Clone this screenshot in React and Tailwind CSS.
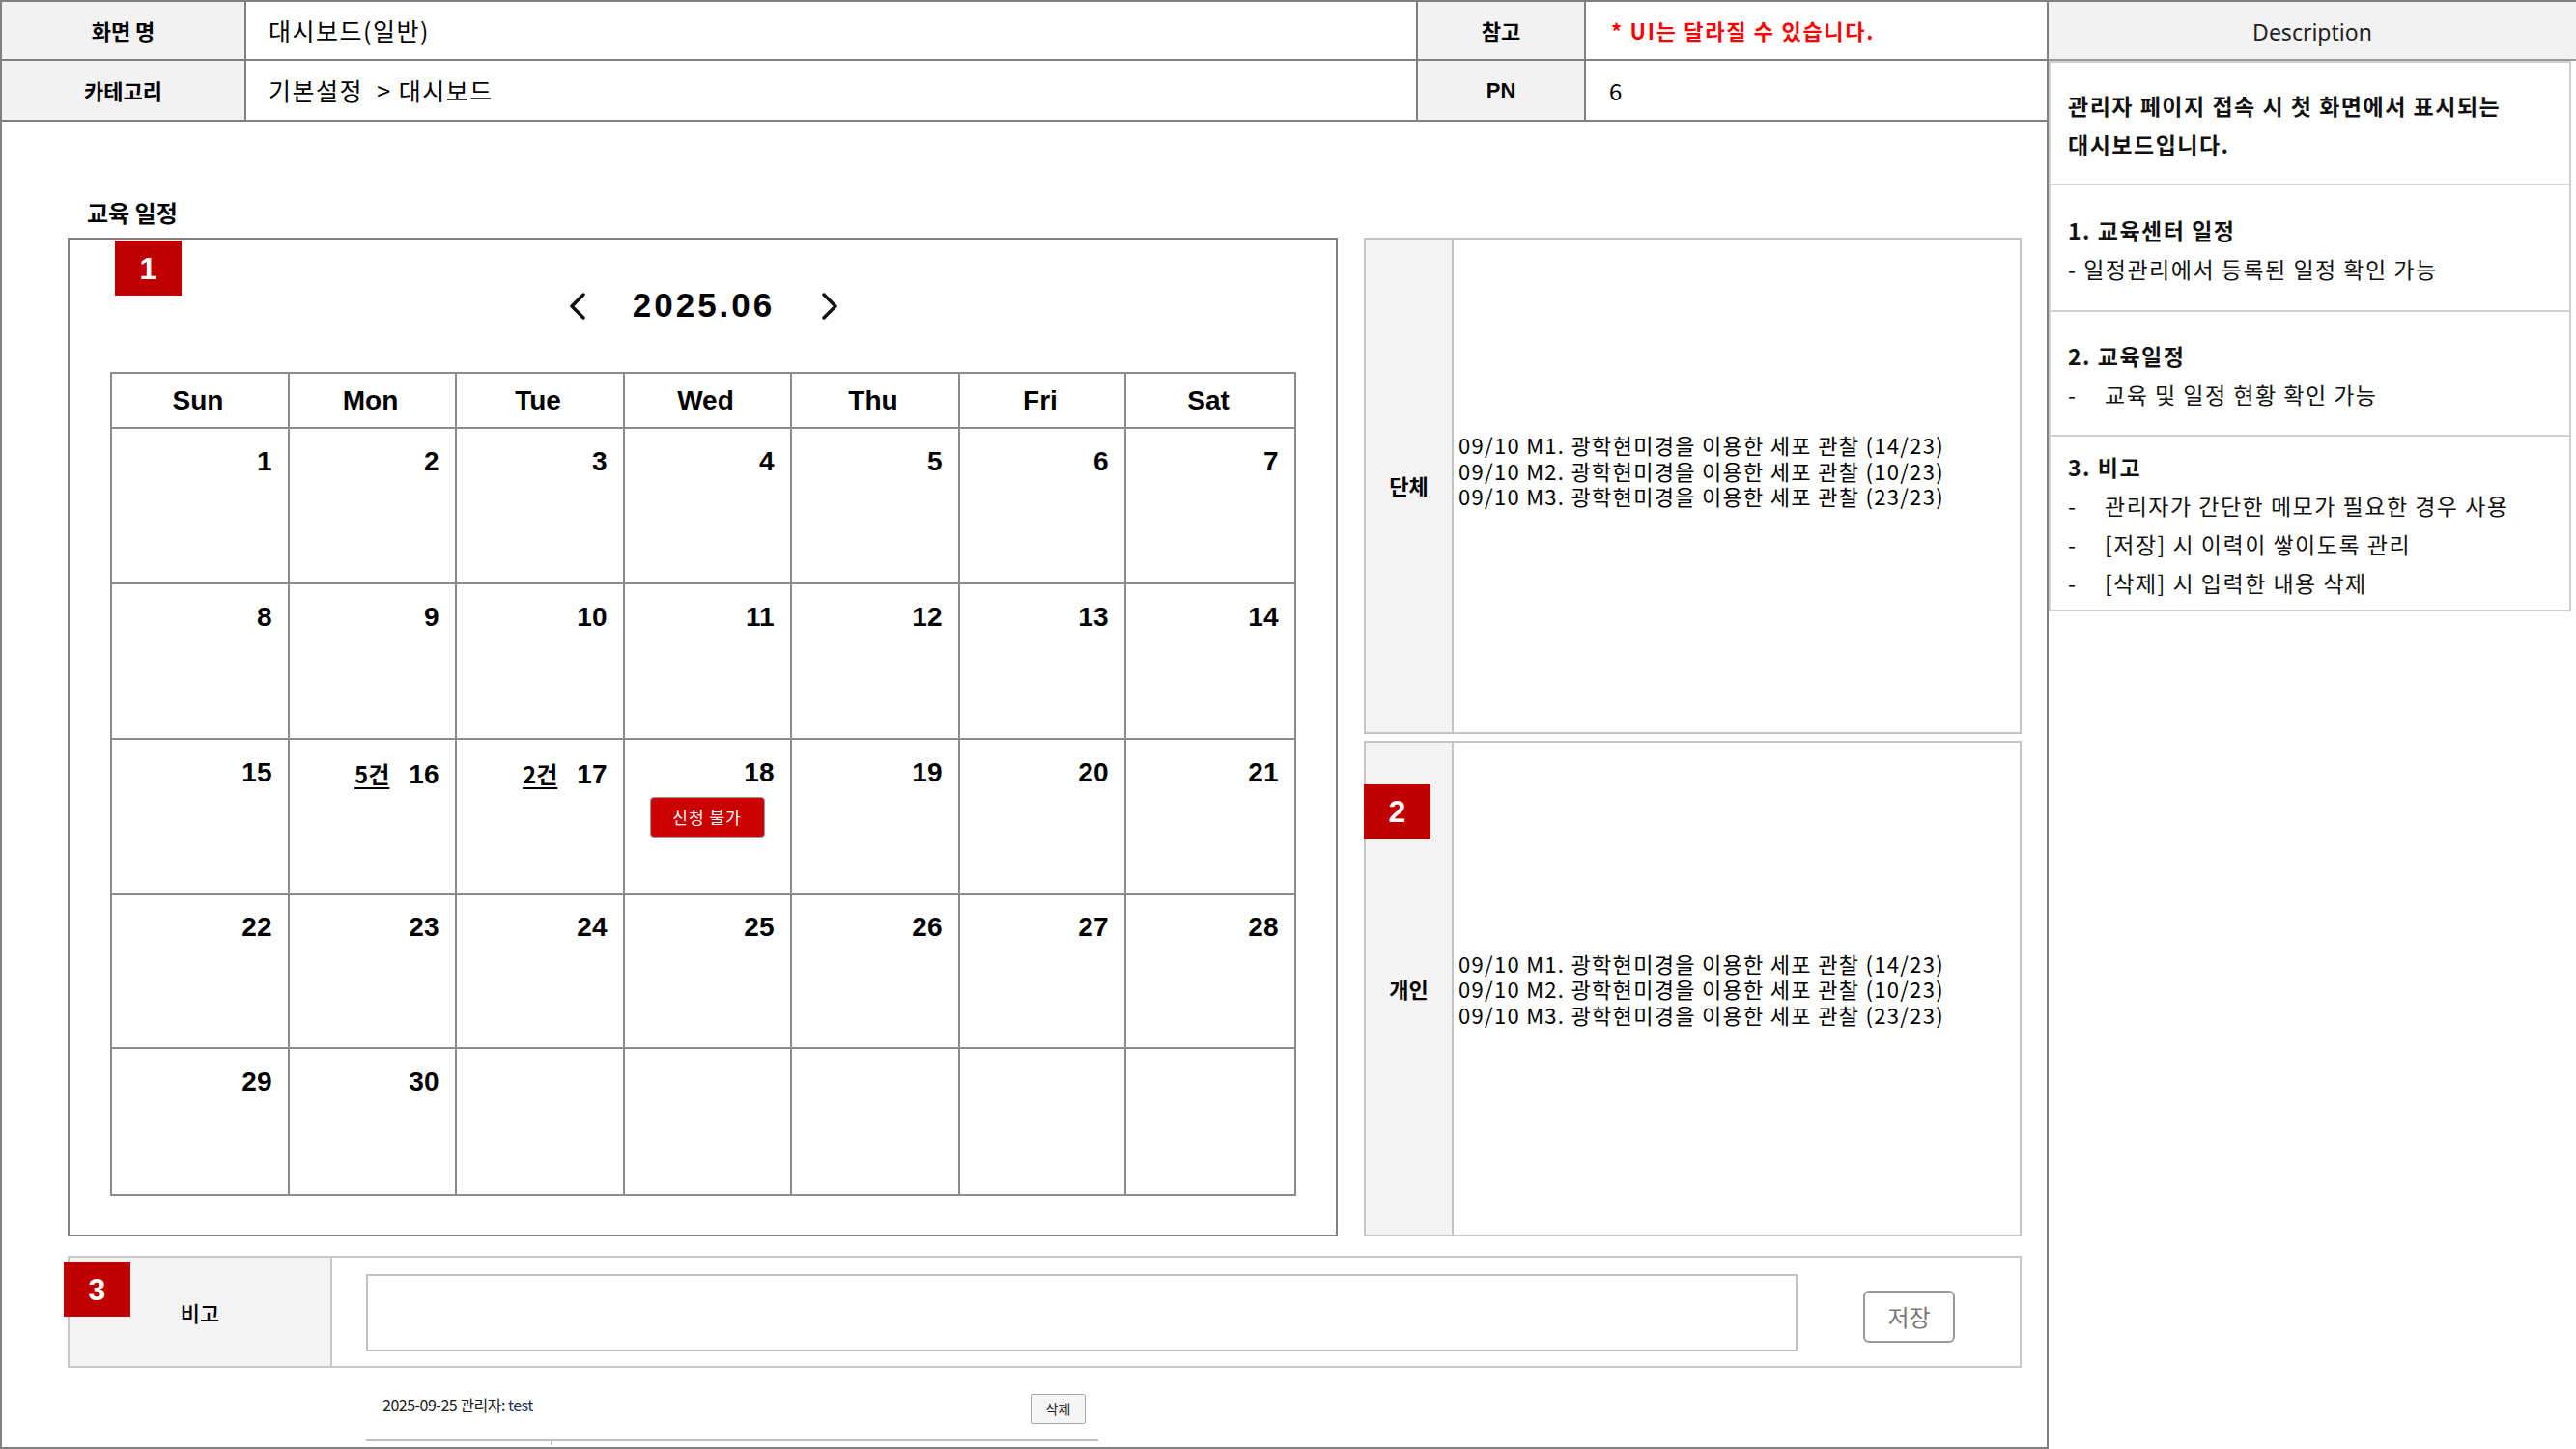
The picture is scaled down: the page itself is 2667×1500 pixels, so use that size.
import React from "react";

const KR = "font-['Noto_Sans_CJK_KR','Noto_Sans',sans-serif]";
const AR = "font-['Liberation_Sans','Noto_Sans_CJK_KR',sans-serif]";

const weeks = [
  [1, 2, 3, 4, 5, 6, 7],
  [8, 9, 10, 11, 12, 13, 14],
  [15, 16, 17, 18, 19, 20, 21],
  [22, 23, 24, 25, 26, 27, 28],
  [29, 30, null, null, null, null, null],
];
const rowHeights = ["h-[161px]", "h-[161px]", "h-[160px]", "h-[160px]", "h-[152px]"];
const days = ["Sun", "Mon", "Tue", "Wed", "Thu", "Fri", "Sat"];
const counts = { 16: "5건", 17: "2건" };

const lessons = [
  "09/10 M1. 광학현미경을 이용한 세포 관찰 (14/23)",
  "09/10 M2. 광학현미경을 이용한 세포 관찰 (10/23)",
  "09/10 M3. 광학현미경을 이용한 세포 관찰 (23/23)",
];

function Badge({ n, className }) {
  return (
    <div
      className={`absolute w-[69px] h-[57px] bg-[#c00000] text-white flex items-center justify-center text-[32px] font-bold ${AR} ${className}`}
    >
      {n}
    </div>
  );
}

function Chevron({ dir }) {
  return (
    <svg width="18" height="28" viewBox="0 0 18 28" fill="none">
      <path
        d={dir === "left" ? "M15 2 L3 14 L15 26" : "M3 2 L15 14 L3 26"}
        stroke="#111"
        strokeWidth="3.5"
        strokeLinecap="round"
        strokeLinejoin="round"
      />
    </svg>
  );
}

function Calendar() {
  return (
    <div className="relative w-[1315px] h-[1034px] border-2 border-[#808080] flex flex-col items-center">
      <Badge n="1" className="left-[47px] top-[1px]" />
      <div className="h-[137px] flex items-center gap-[48px] pl-[2px]">
        <Chevron dir="left" />
        <span className={`text-[35px] font-bold tracking-[3px] ${AR}`}>2025.06</span>
        <Chevron dir="right" />
      </div>
      <div className={`grid grid-cols-[184px_173px_174px_173px_174px_172px_176px] border-l-2 border-t-2 border-[#8c8c8c] ${AR}`}>
        {days.map((d) => (
          <div
            key={d}
            className="h-[57px] border-r-2 border-b-2 border-[#8c8c8c] flex items-center justify-center text-[28px] font-bold pr-[3px]"
          >
            {d}
          </div>
        ))}
        {weeks.map((w, i) =>
          w.map((d, j) => (
            <div
              key={`${i}-${j}`}
              className={`${rowHeights[i]} border-r-2 border-b-2 border-[#8c8c8c] flex flex-col items-end pt-[17px] pr-[16px]`}
            >
              {d && (
                <div className="flex items-baseline gap-[20px]">
                  {counts[d] && (
                    <span className={`text-[24px] font-bold underline underline-offset-4 ${KR}`}>{counts[d]}</span>
                  )}
                  <span className="text-[28px] leading-[34px] font-bold">{d}</span>
                </div>
              )}
              {d === 18 && (
                <div className="self-center ml-[16px] mt-[8px] w-[119px] h-[42px] rounded-[4px] bg-[#cc0000] border border-[#9a9a9a] flex items-center justify-center">
                  <span className={`text-white text-[17px] tracking-[1px] ${KR}`}>신청 불가</span>
                </div>
              )}
            </div>
          ))
        )}
      </div>
    </div>
  );
}

function SchedulePanel({ label, badge, shift }) {
  return (
    <div className="relative flex-1 flex border-2 border-[#c4c4c4]">
      {badge && <Badge n={badge} className="-left-[2px] top-[43px]" />}
      <div className="w-[91px] shrink-0 bg-[#f3f3f3] border-r-2 border-[#c4c4c4] flex items-center justify-center">
        <span className={`text-[22px] font-bold ${KR}`}>{label}</span>
      </div>
      <div className={`flex-1 flex flex-col justify-center pl-[5px] ${shift}`}>
        {lessons.map((l) => (
          <div key={l} className={`text-[22px] leading-[26.5px] tracking-[1.3px] text-black ${KR}`}>
            {l}
          </div>
        ))}
      </div>
    </div>
  );
}

function DescBox({ h, children }) {
  return (
    <div className={`${h} border-2 border-t-0 border-[#d0d0d0] flex flex-col justify-center pl-[18px] pt-[3px]`}>
      {children}
    </div>
  );
}

function DLine({ children, bold, tab }) {
  return (
    <div className={`text-[23px] leading-[40px] tracking-[1.5px] text-[#111] ${bold ? "font-bold" : ""}`}>
      {tab ? (
        <>
          <span className="inline-block w-[38px]">-</span>
          {children}
        </>
      ) : (
        children
      )}
    </div>
  );
}

export default function App() {
  return (
    <div className={`w-[2667px] h-[1500px] flex bg-white text-black ${KR}`}>
      <div className="w-[2119px] shrink-0 flex flex-col">
        <div className="grid grid-cols-[253px_1213px_174px_1fr] border-t-2 border-l-2 border-[#808080]">
          <div className="h-[61px] bg-[#f2f2f2] border-r-2 border-b-2 border-[#808080] flex items-center justify-center text-[22px] font-bold">
            화면 명
          </div>
          <div className="h-[61px] border-r-2 border-b-2 border-[#808080] flex items-center pl-[23px] text-[25px] tracking-[1.5px]">
            대시보드(일반)
          </div>
          <div className="h-[61px] bg-[#f2f2f2] border-r-2 border-b-2 border-[#808080] flex items-center justify-center text-[22px] font-bold">
            참고
          </div>
          <div className="h-[61px] border-b-2 border-[#808080] flex items-center pl-[26px] text-[22px] tracking-[1.7px] font-bold text-[#ff0000]">
            * UI는 달라질 수 있습니다.
          </div>
          <div className="h-[63px] bg-[#f2f2f2] border-r-2 border-b-2 border-[#808080] flex items-center justify-center text-[22px] font-bold">
            카테고리
          </div>
          <div className="h-[63px] border-r-2 border-b-2 border-[#808080] flex items-center pl-[23px] text-[25px] tracking-[1.5px] whitespace-pre">
            {"기본설정  > 대시보드"}
          </div>
          <div className={`h-[63px] bg-[#f2f2f2] border-r-2 border-b-2 border-[#808080] flex items-center justify-center text-[22px] font-bold ${AR}`}>
            PN
          </div>
          <div className="h-[63px] border-b-2 border-[#808080] flex items-center pl-[24px] text-[24px]">6</div>
        </div>

        <main className="flex-1 border-l-2 border-b-2 border-[#808080] pl-[68px] pt-[78px]">
          <h2 className="ml-[20px] text-[24px] leading-[32px] font-bold">교육 일정</h2>
          <div className="mt-[10px] flex gap-[27px]">
            <Calendar />
            <div className="w-[681px] h-[1034px] flex flex-col gap-[7px]">
              <SchedulePanel label="단체" shift="pb-[32px]" />
              <SchedulePanel label="개인" badge="2" />
            </div>
          </div>

          <div className="relative mt-[20px] w-[2023px] h-[116px] flex border-2 border-[#c8c8c8]">
            <Badge n="3" className="-left-[6px] top-[4px]" />
            <div className="w-[272px] shrink-0 bg-[#f3f3f3] border-r-2 border-[#c8c8c8] flex items-center justify-center text-[22px] font-medium">
              비고
            </div>
            <div className="flex items-start">
              <textarea className="ml-[35px] mt-[17px] w-[1482px] h-[80px] border-2 border-[#c0c0c0] resize-none outline-none" />
              <button className="ml-[68px] mt-[34px] w-[95px] h-[54px] rounded-[6px] border-2 border-[#9a9a9a] bg-white text-[24px] text-[#777]">
                저장
              </button>
            </div>
          </div>

          <div className="relative ml-[309px] mt-[27px] w-[758px] h-[49px] border-b-2 border-[#bdbdbd] flex items-start justify-between pl-[17px] pr-[13px]">
            <span className="text-[16px] leading-[22px] text-[#1a1a1a] tracking-[-0.5px]">
              2025-09-25 관리자: <span className="text-[#1f2f55]">test</span>
            </span>
            <button className="w-[57px] h-[31px] bg-[#f5f5f5] border border-[#a8a8a8] rounded-[2px] text-[14px] text-[#222]">
              삭제
            </button>
            <div className="absolute left-[191px] -bottom-[6px] w-[2px] h-[4px] bg-[#bdbdbd]" />
          </div>
        </main>
      </div>

      <aside className="flex-1 border-l-2 border-t-2 border-[#808080] flex flex-col">
        <div className="h-[61px] bg-[#f2f2f2] border-b-2 border-[#9a9a9a] flex items-center justify-center pt-[4px] text-[23px] font-['Noto_Sans',sans-serif] text-[#222]">
          Description
        </div>
        <div className="mr-[5px] border-t-2 border-[#d0d0d0]">
          <DescBox h="h-[127px]">
            <DLine bold>관리자 페이지 접속 시 첫 화면에서 표시되는</DLine>
            <DLine bold>대시보드입니다.</DLine>
          </DescBox>
          <DescBox h="h-[131px]">
            <DLine bold>1. 교육센터 일정</DLine>
            <DLine>- 일정관리에서 등록된 일정 확인 가능</DLine>
          </DescBox>
          <DescBox h="h-[129px]">
            <DLine bold>2. 교육일정</DLine>
            <DLine tab>교육 및 일정 현황 확인 가능</DLine>
          </DescBox>
          <DescBox h="h-[181px]">
            <DLine bold>3. 비고</DLine>
            <DLine tab>관리자가 간단한 메모가 필요한 경우 사용</DLine>
            <DLine tab>[저장] 시 이력이 쌓이도록 관리</DLine>
            <DLine tab>[삭제] 시 입력한 내용 삭제</DLine>
          </DescBox>
        </div>
      </aside>
    </div>
  );
}
